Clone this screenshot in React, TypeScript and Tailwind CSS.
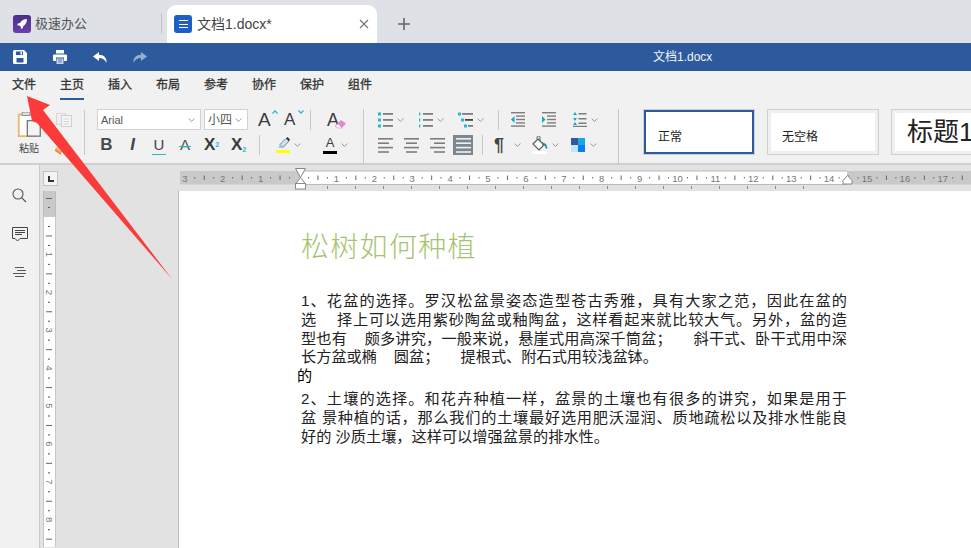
import React from "react";

const Chev = ({ className = "" }: { className?: string }) => (
  <svg width="7" height="4" viewBox="0 0 7 4" className={className}>
    <path d="M.6.5 3.5 3.400 6.400.5" fill="none" stroke="#8f8f8f" strokeWidth="0.900" />
  </svg>
);

const Caret = ({ down = false }: { down?: boolean }) => (
  <svg width="6" height="4" viewBox="0 0 6 4" className="absolute left-[14px] top-[1px]">
    <path d={down ? "M.5.5 3 3.200 5.500.5" : "M.5 3.500 3 .8 5.500 3.500"} fill="none" stroke="#27b8d0" strokeWidth="1.200" />
  </svg>
);

const Div = ({ h = "h-[20px]" }: { h?: string }) => <div className={`w-[1px] bg-[#c9c9c9] shrink-0 ${h}`} />;

const Lines = ({ rows, w = 15, box = false }: { rows: [number, number][]; w?: number; box?: boolean }) => (
  <svg width={w} height="16" viewBox={`0 0 ${w} 16`}>
    {rows.map(([x, l], i) => (
      <rect key={i} x={x} y={1 + i * 4.4} width={l} height="1.6" fill={box ? "#eef0f1" : "#7d7d7d"} />
    ))}
  </svg>
);

const ListIcon = ({ kind }: { kind: number }) => (
  <svg width="15" height="16" viewBox="0 0 15 16">
    {[2, 8, 14].map((y, i) => {
      const x = kind === 2 ? [0, 3, 6][i] : 0;
      return (
        <g key={y}>
          {kind === 1 ? (
            <rect x="1" y={y - 1.5} width="1.3" height="3" fill="#27b8d0" />
          ) : (
            <rect x={x} y={y - 1.5} width="3" height="3" fill="#27b8d0" />
          )}
          <rect x={kind === 2 ? x + 4 : 5} y={y - 1} width={kind === 2 ? 11 - x : 10} height="1.8" fill={kind === 2 && i === 1 ? "#444" : "#7d7d7d"} />
        </g>
      );
    })}
  </svg>
);

const IndentIcon = ({ dir }: { dir: number }) => (
  <svg width="14" height="15" viewBox="0 0 14 15">
    <rect x="0" y="0" width="14" height="1.4" fill="#7d7d7d" />
    <rect x="5" y="3.4" width="9" height="1.4" fill="#7d7d7d" />
    <rect x="5" y="6.8" width="9" height="1.4" fill="#7d7d7d" />
    <rect x="5" y="10.2" width="9" height="1.4" fill="#7d7d7d" />
    <rect x="0" y="13.4" width="14" height="1.4" fill="#7d7d7d" />
    <path d={dir < 0 ? "M3.5 4 0 7.5 3.5 11Z" : "M0 4 3.5 7.5 0 11Z"} fill="#16a9c4" />
  </svg>
);

const LineSpacing = () => (
  <svg width="14" height="15" viewBox="0 0 14 15">
    <path d="M2 0 4 3H0ZM2 9 4 6H0ZM2 10l2 3H0Z" fill="#16a9c4" />
    <rect x="5.5" y="1" width="8" height="1.5" fill="#7d7d7d" />
    <rect x="5.5" y="6" width="8" height="1.5" fill="#7d7d7d" />
    <rect x="5.5" y="10.5" width="8" height="1.5" fill="#7d7d7d" />
    <rect x="0" y="13.8" width="14" height="1.3" fill="#7d7d7d" />
  </svg>
);

function HRuler() {
  const zero = 118.5;
  const u = 37.9;
  const items: React.ReactNode[] = [];
  for (let i = -3; i <= 17; i++) {
    const x = zero + i * u;
    if (i !== 0)
      items.push(
        <text key={`n${i}`} x={x} y="10.5" fontSize="9.5" textAnchor="middle" fill="#777" fontFamily="Liberation Sans">
          {Math.abs(i)}
        </text>
      );
    items.push(<rect key={`a${i}`} x={x + u / 4} y="6" width="1" height="1.5" fill="#666" />);
    items.push(<rect key={`b${i}`} x={x + u / 2} y="4.5" width="1" height="4.5" fill="#666" />);
    items.push(<rect key={`c${i}`} x={x + (3 * u) / 4} y="6" width="1" height="1.5" fill="#666" />);
  }
  const stops: React.ReactNode[] = [];
  for (let i = 0; i < 18; i++) stops.push(<rect key={i} x={147 + i * 28} y="15" width="1" height="3" fill="#888" />);
  return (
    <svg width="791" height="20" viewBox="0 0 791 20" className="overflow-visible block">
      <rect x="0" y="0" width="791" height="13.5" fill="#c9c9c9" />
      <rect x="120" y="0" width="547" height="13.5" fill="#fff" />
      <rect x="120" y="-0.5" width="547" height="1" fill="#b9b9b9" />
      <rect x="120" y="13" width="547" height="1" fill="#b9b9b9" />
      {items}
      {stops}
      <path d="M115.5-2.5h10l-5 9Z" fill="#fff" stroke="#888" />
      <path d="M120.5 6.5l5 6.5h-10Z" fill="#fff" stroke="#888" />
      <rect x="115.5" y="12.5" width="10" height="5.5" fill="#fff" stroke="#888" />
      <path d="M667.5 4.5l4.5 5v3.5h-9V9.5Z" fill="#fff" stroke="#888" />
    </svg>
  );
}

function VRuler() {
  const zero = 25.5;
  const u = 37.9;
  const items: React.ReactNode[] = [];
  for (let i = 0; i <= 8; i++) {
    const y = zero + i * u;
    if (i > 0)
      items.push(
        <text key={`n${i}`} x="6" y={y} fontSize="9.5" textAnchor="middle" dominantBaseline="central" fill="#777" fontFamily="Liberation Sans" transform={`rotate(90 6 ${y})`}>
          {i}
        </text>
      );
    items.push(<rect key={`a${i}`} x="5" y={y + u / 4} width="2" height="1" fill="#555" />);
    items.push(<rect key={`b${i}`} x="3" y={y + u / 2} width="6" height="1" fill="#666" />);
    items.push(<rect key={`c${i}`} x="5" y={y + (3 * u) / 4} width="2" height="1" fill="#555" />);
  }
  return (
    <svg width="13" height="356" viewBox="0 0 13 356" className="block">
      <rect x="0" y="0" width="13" height="356" fill="#fff" />
      <rect x="0" y="0" width="13" height="26" fill="#c9c9c9" />
      <rect x="0" y="0" width="0.8" height="356" fill="#b9b9b9" />
      <rect x="12.2" y="0" width="0.8" height="356" fill="#b9b9b9" />
      <rect x="3" y="7" width="6" height="1" fill="#666" />
      <rect x="5" y="16" width="2" height="1" fill="#555" />
      {items}
    </svg>
  );
}

const body = "text-[15.2px] leading-[18.8px] text-[#222] whitespace-nowrap";
const just = "text-[15.2px] leading-[18.8px] text-[#222] [text-align:justify] [text-align-last:justify] whitespace-normal";

export default function App() {
  return (
    <div className="relative w-[971px] h-[548px] overflow-hidden flex flex-col bg-[#e2e2e2] font-['Liberation_Sans','Noto_Sans_CJK_SC',sans-serif]">
      {/* tab strip */}
      <div className="h-[43px] bg-[#dee1e6] flex items-end shrink-0">
        <div className="w-[161px] h-[38px] flex items-center pl-[13px] gap-[4px]">
          <div className="w-[18px] h-[18px] rounded-[3px] bg-gradient-to-b from-[#4b2f86] to-[#6a3fb0] flex items-center justify-center">
            <svg width="12" height="12" viewBox="0 0 12 12">
              <path d="M11 1C8 1 5.5 2.5 4 5L2 5.5 1 7.5l2-.3L5 9l-.2 2 2-1 .5-2C9.800 6.500 11 4 11 1Z" fill="#fff" />
            </svg>
          </div>
          <span className="text-[13px] text-[#555]">极速办公</span>
        </div>
        <div className="w-[1px] h-[20px] bg-[#c2c4c8] mb-[10px]" />
        <div className="ml-[5px] w-[210px] h-[38px] bg-white rounded-t-[9px] flex items-center pl-[7px] pr-[8px]">
          <div className="w-[18px] h-[18px] rounded-[3px] bg-[#1f5fc4] flex flex-col items-center justify-center gap-[2.500px]">
            <div className="w-[9px] h-[1px] bg-white" />
            <div className="w-[9px] h-[1px] bg-white" />
            <div className="w-[9px] h-[1px] bg-white" />
          </div>
          <span className="ml-[5px] text-[14px] text-[#444]">文档1.docx*</span>
          <svg width="10" height="10" viewBox="0 0 10 10" className="ml-auto">
            <path d="M1 1l8 8M9 1 1 9" stroke="#777" strokeWidth="1.2" />
          </svg>
        </div>
        <svg width="14" height="14" viewBox="0 0 14 14" className="ml-[20px] mb-[12px]">
          <path d="M7 1v12M1 7h12" stroke="#666" strokeWidth="1.6" />
        </svg>
      </div>

      {/* title bar */}
      <div className="relative h-[28px] bg-[#2d5a9d] flex items-center shrink-0 pl-[13px]">
        <svg width="14" height="14" viewBox="0 0 14 14">
          <path fillRule="evenodd" d="M1.500 0H11l3 3v9.500A1.500 1.500 0 0 1 12.500 14h-11A1.500 1.500 0 0 1 0 12.500v-11A1.500 1.500 0 0 1 1.500 0ZM3 1.500V5h7V1.500ZM3.500 8v4.500h7V8Z" fill="#fff" />
          <rect x="7.500" y="2" width="1.500" height="2.500" fill="#fff" />
        </svg>
        <svg width="14" height="14" viewBox="0 0 14 14" className="ml-[26px]">
          <path fillRule="evenodd" d="M3 0h8v3.500H3ZM1 4.500h12a1 1 0 0 1 1 1V10a1 1 0 0 1-1 1h-2V7.500H3V11H1a1 1 0 0 1-1-1V5.500a1 1 0 0 1 1-1Z" fill="#fff" />
          <path d="M3.500 8.500h7V14h-7Z" fill="#c9d6e8" />
          <path d="M5 10h4M5 12h4" stroke="#5c80b3" />
        </svg>
        <svg width="14" height="11" viewBox="0 0 14 11" className="ml-[26px]">
          <path d="M6 0 0 4.500 6 9V6c3.500 0 6 1.500 7.500 5C14 6 11 2.800 6 2.800Z" fill="#fff" />
        </svg>
        <svg width="14" height="11" viewBox="0 0 14 11" className="ml-[26px] opacity-50">
          <path d="M8 0l6 4.500L8 9V6c-3.500 0-6 1.500-7.500 5C0 6 3 2.800 8 2.800Z" fill="#fff" />
        </svg>
        <span className="absolute left-[653px] top-[6px] text-[12px] leading-[16px] text-[#f2f5fa]">文档1.docx</span>
      </div>

      {/* menu */}
      <div className="h-[29px] bg-[#f1f1f1] flex pl-[12px] gap-[24px] shrink-0">
        {["文件", "主页", "插入", "布局", "参考", "协作", "保护", "组件"].map((t, i) => (
          <div key={t} className={`h-[29px] w-[24px] text-[12px] leading-[29px] text-[#333] [-webkit-text-stroke:0.3px_#333] ${i === 1 ? "border-b-[2px] border-[#2d5a9d]" : ""}`}>
            {t}
          </div>
        ))}
      </div>

      {/* toolbar */}
      <div className="h-[65px] bg-[#f1f1f1] border-b-[2px] border-[#cfcfcf] flex items-start shrink-0 pt-[9px]">
        <div className="w-[84px] h-[47px] flex shrink-0">
          <div className="ml-[16px] mt-[3px] w-[26px] flex flex-col items-center">
            <svg width="27" height="29" viewBox="0 0 27 29">
              <rect x="1" y="3" width="20" height="25" fill="#fff" stroke="#f2b06a" strokeWidth="2" />
              <rect x="5" y="0" width="9" height="4" fill="#ddd" stroke="#888" />
              <rect x="11" y="10" width="15" height="18" fill="#f4f4f4" stroke="#7a7a7a" strokeWidth="1.600" />
            </svg>
            <span className="text-[10px] leading-[14px] mt-[5px] text-[#444] whitespace-nowrap">粘贴</span>
          </div>
          <div className="ml-[14px] mt-[4px] flex flex-col items-start">
            <svg width="16" height="14" viewBox="0 0 16 14">
              <rect x="0.500" y="0.500" width="9" height="11" fill="#eee" stroke="#d8d8d8" />
              <rect x="5.500" y="2.500" width="10" height="11" fill="#f6f6f6" stroke="#cfcfcf" />
              <path d="M7.500 6h6M7.500 8.500h6M7.500 11h6" stroke="#d6d6d6" />
            </svg>
            <svg width="12" height="12" viewBox="0 0 12 12" className="mt-[17px] -ml-[1px]">
              <path d="M0 5 6 1l5 4-5 4Z" fill="#f0a04a" />
              <path d="M0 5l6 4v2L0 7Z" fill="#e78a2b" />
              <path d="M2 5l4-2.500L9 5 6 7Z" fill="#fbe2c3" />
            </svg>
          </div>
        </div>
        <Div h="h-[45px] mt-[1px]" />

        {/* font group */}
        <div className="w-[278px] shrink-0 flex flex-col pl-[8px]">
          <div className="flex items-center h-[21px] ml-[4px]">
            <div className="w-[104px] h-[21px] bg-white border border-[#d2d2d2] flex items-center pl-[3px] pr-[5px] justify-between">
              <span className="text-[11px] leading-[20px] pt-[1px] text-[#555]">Arial</span>
              <Chev />
            </div>
            <div className="ml-[3px] w-[44px] h-[21px] bg-white border border-[#d2d2d2] flex items-center pl-[3px] pr-[5px] justify-between">
              <span className="text-[12px] text-[#555]">小四</span>
              <Chev />
            </div>
            <div className="ml-[10px] w-[19px] relative text-[19px] leading-[22px] text-[#3c3c3c]">
              A<Caret />
            </div>
            <div className="ml-[7px] w-[19px] relative text-[17px] leading-[22px] text-[#3c3c3c]">
              A<Caret down />
            </div>
            <Div h="h-[20px] ml-[7px]" />
            <div className="ml-[16px] relative w-[18px] text-[18px] leading-[20px] text-[#3c3c3c]">
              A
              <svg width="11" height="9" viewBox="0 0 11 9" className="absolute left-[8px] top-[10px]">
                <path d="M6 0l5 3.500L7 8H3L0 6Z" fill="#dd8ad0" />
                <path d="M3 4 0 6l3 2h4Z" fill="#fff" stroke="#dd8ad0" strokeWidth="0.600" />
              </svg>
            </div>
          </div>
          <div className="flex items-center h-[20px] mt-[5px]">
            <div className="w-[26px] text-center text-[17px] leading-[20px] text-[#4a4a4a] font-bold pl-[1px]">B</div>
            <div className="w-[27px] text-center text-[17px] leading-[20px] text-[#444] font-bold italic">I</div>
            <div className="w-[26px] text-center text-[15px] leading-[18px] text-[#444] relative">
              U<div className="absolute left-[6px] right-[6px] bottom-[-1px] h-[1.500px] bg-[#27b8d0]" />
            </div>
            <div className="w-[26px] text-center text-[15px] leading-[18px] text-[#555] relative">
              A<div className="absolute left-[7px] right-[7px] top-[10px] h-[1px] bg-[#27b8d0]" />
            </div>
            <div className="w-[27px] text-center text-[17px] leading-[20px] text-[#3a3a3a] font-bold">
              X<sup className="text-[7px] text-[#27b8d0] leading-none">2</sup>
            </div>
            <div className="w-[27px] text-center text-[17px] leading-[20px] text-[#3a3a3a] font-bold">
              X<sub className="text-[7px] text-[#27b8d0] leading-none">2</sub>
            </div>
            <Div h="h-[20px] ml-[7px]" />
            <div className="ml-[15px] w-[15px] flex flex-col items-center">
              <svg width="14" height="13" viewBox="0 0 14 13">
                <path d="M4 7.500 10 1.500l3 2.500-6 6.500Z" fill="#cfe4ef" stroke="#5a6a75" strokeWidth="0.800" />
                <path d="M10 1.500 11.500 0 14 2.500 13 4Z" fill="#333" />
                <path d="M4 7.500 2.500 11l4.500-.5Z" fill="#8ac6dd" />
              </svg>
              <div className="w-[14px] h-[3px] bg-[#ffff00]" />
            </div>
            <Chev className="ml-[4px]" />
            <div className="ml-[22px] w-[14px] flex flex-col items-center">
              <span className="text-[13px] leading-[14px] text-[#3c3c3c]">A</span>
              <div className="w-[14px] h-[3px] bg-black mt-[1px]" />
            </div>
            <Chev className="ml-[4px]" />
          </div>
        </div>
        <Div h="h-[55px]" />

        {/* paragraph group */}
        <div className="w-[254px] shrink-0 flex flex-col pl-[14px]">
          <div className="flex items-center h-[21px]">
            <ListIcon kind={0} />
            <Chev className="ml-[4px]" />
            <div className="ml-[14px]"><ListIcon kind={1} /></div>
            <Chev className="ml-[4px]" />
            <div className="ml-[14px]"><ListIcon kind={2} /></div>
            <Chev className="ml-[4px]" />
            <Div h="h-[20px] ml-[14px]" />
            <div className="ml-[12px]"><IndentIcon dir={-1} /></div>
            <div className="ml-[17px]"><IndentIcon dir={1} /></div>
            <div className="ml-[17px]"><LineSpacing /></div>
            <Chev className="ml-[4px]" />
          </div>
          <div className="flex items-center h-[20px] mt-[5px]">
            <Lines w={15} rows={[[0, 15], [0, 11], [0, 15], [0, 11]]} />
            <div className="ml-[11px]"><Lines w={15} rows={[[0, 15], [2, 11], [0, 15], [2, 11]]} /></div>
            <div className="ml-[11px]"><Lines w={15} rows={[[0, 15], [4, 11], [0, 15], [4, 11]]} /></div>
            <div className="ml-[8px] w-[20px] h-[20px] bg-[#7c878f] flex items-center justify-center">
              <Lines w={15} box rows={[[0, 15], [0, 15], [0, 15], [0, 15]]} />
            </div>
            <Div h="h-[20px] ml-[9px]" />
            <div className="ml-[11px] w-[14px] text-[18px] leading-[20px] font-bold text-[#444]">¶</div>
            <Chev className="ml-[6px]" />
            <svg width="16" height="18" viewBox="0 0 16 18" className="ml-[11px]">
              <rect x="0" y="15" width="15" height="3" fill="#fff" />
              <path d="M1 8 6 3l6 6-5 5Z" fill="#fff" stroke="#555" strokeWidth="1.100" />
              <path d="M5 3V1.500a1.500 1.500 0 0 1 3 0V5" fill="none" stroke="#555" />
              <path d="M10 6l4 2 1.500 4-1.500 1-1-3-3-1Z" fill="#2a8a95" />
            </svg>
            <Chev className="ml-[4px]" />
            <svg width="14" height="14" viewBox="0 0 14 14" className="ml-[12px]">
              <rect x="0" y="0" width="7" height="7" fill="#2d5a9d" />
              <rect x="7" y="0" width="7" height="7" fill="#16a9e8" />
              <rect x="0" y="7" width="7" height="7" fill="#bfe6f7" />
              <rect x="7" y="7" width="7" height="7" fill="#0a7ef0" />
            </svg>
            <Chev className="ml-[5px]" />
          </div>
        </div>
        <Div h="h-[55px]" />

        {/* styles */}
        <div className="flex items-start ml-[24px] overflow-hidden flex-1">
          <div className="w-[112px] h-[46px] shrink-0 border border-[#cfcfcf] bg-white">
            <div className="h-full border-[2px] border-[#2d5a9d] pl-[12px] pt-[17px] text-[12px] leading-[16px] text-[#222]">正常</div>
          </div>
          <div className="ml-[12px] w-[112px] h-[46px] shrink-0 border border-[#cfcfcf] bg-white">
            <div className="h-full border-[3px] border-[#f0f0f0] pl-[11px] pt-[16px] text-[12px] leading-[16px] text-[#222]">无空格</div>
          </div>
          <div className="ml-[12px] w-[112px] h-[46px] shrink-0 border border-[#cfcfcf] bg-white">
            <div className="h-full border-[3px] border-[#f0f0f0] pl-[12px] pt-[1px] text-[26px] leading-[36px] text-[#222] whitespace-nowrap">标题1</div>
          </div>
        </div>
      </div>

      {/* workspace */}
      <div className="flex-1 flex min-h-0">
        <div className="w-[39px] bg-[#f1f1f1] border-r border-[#c9c9c9] box-content shrink-0 flex flex-col items-center pt-[23px]">
          <svg width="15" height="15" viewBox="0 0 15 15" className="mb-[24px]">
            <circle cx="6" cy="6" r="5" fill="none" stroke="#555" strokeWidth="1.100" />
            <path d="M9.800 9.800 14 14" stroke="#555" strokeWidth="1.200" />
          </svg>
          <svg width="16" height="15" viewBox="0 0 16 15" className="mb-[25px]">
            <path d="M.5.500h15v11H8L5.500 14 3 11.500H.5Z" fill="none" stroke="#444" />
            <path d="M3 3.500h10M3 5.500h10M3 7.500h7" stroke="#444" />
          </svg>
          <svg width="14" height="11" viewBox="0 0 14 11">
            <path d="M2 .5h9M4 3.500h9M0 6.500h13M2 9.500h9" stroke="#555" />
          </svg>
        </div>
        <div className="flex-1 flex flex-col min-w-0">
          <div className="h-[26px] flex items-start pt-[6px] shrink-0">
            <div className="ml-[3px] w-[15px] h-[15px] border border-[#c4c4c4] bg-[#f4f4f4] flex items-center justify-center">
              <div className="w-[6px] h-[6px] border-l-[2px] border-b-[2px] border-[#333]" />
            </div>
            <div className="ml-[122px]"><HRuler /></div>
          </div>
          <div className="flex-1 flex min-h-0">
            <div className="ml-[3px] w-[13px] shrink-0"><VRuler /></div>
            <div className="ml-[122px] flex-1 bg-white border-l border-[#b9b9c2] pl-[122px] pt-[36px]">
              <div className="text-[28px] leading-[36px] text-[#a6c470] tracking-[1.300px] font-['Noto_Sans_CJK_SC',serif] font-light">松树如何种植</div>
              <div className="w-[546px] mt-[29px]">
                <div className={just}>1、花盆的选择。罗汉松盆景姿态造型苍古秀雅，具有大家之范，因此在盆的</div>
                <div className={just}>选{"\u00a0\u00a0\u00a0\u00a0"}择上可以选用紫砂陶盆或釉陶盆，这样看起来就比较大气。另外，盆的造</div>
                <div className={just}>型也有{"\u00a0\u00a0\u00a0\u00a0"}颇多讲究，一般来说，悬崖式用高深千筒盆；{"\u00a0\u00a0\u00a0\u00a0\u00a0"}斜干式、卧干式用中深</div>
                <div className={body}>长方盆或椭{"\u00a0\u00a0\u00a0\u00a0"}圆盆；{"\u00a0\u00a0\u00a0\u00a0\u00a0"}提根式、附石式用较浅盆钵。</div>
                <div className={`${body} -ml-[4px] leading-[17px] text-black`}>的</div>
                <div className="h-[4px]" />
                <div className={just}>2、土壤的选择。和花卉种植一样，盆景的土壤也有很多的讲究，如果是用于</div>
                <div className={just}>盆 景种植的话，那么我们的土壤最好选用肥沃湿润、质地疏松以及排水性能良</div>
                <div className={body}>好的 沙质土壤，这样可以增强盆景的排水性。</div>
              </div>
            </div>
          </div>
        </div>
      </div>

      {/* annotation arrow */}
      <svg width="971" height="548" viewBox="0 0 971 548" className="absolute left-0 top-0 pointer-events-none">
        <path d="M27 96 50 105 43 110 172 279 37 123 32 121Z" fill="#fb3a3a" />
      </svg>
    </div>
  );
}
